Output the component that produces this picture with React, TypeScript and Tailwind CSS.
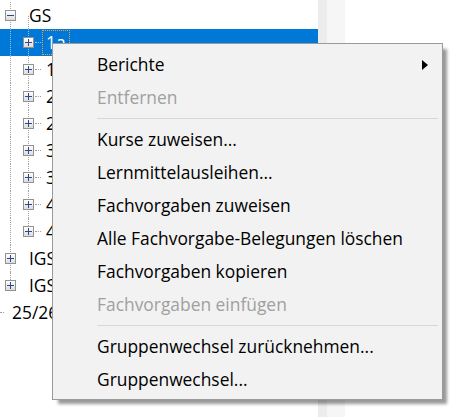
import React from "react";

type Node = { label: string; level: 0 | 1 | 2; expander?: "plus" | "minus"; selected?: boolean };

const rows: Node[] = [
  { label: "GS", level: 1, expander: "minus" },
  { label: "1a", level: 2, expander: "plus", selected: true },
  { label: "1b", level: 2, expander: "plus" },
  { label: "2a", level: 2, expander: "plus" },
  { label: "2b", level: 2, expander: "plus" },
  { label: "3a", level: 2, expander: "plus" },
  { label: "3b", level: 2, expander: "plus" },
  { label: "4a", level: 2, expander: "plus" },
  { label: "4b", level: 2, expander: "plus" },
  { label: "IGS", level: 1, expander: "plus" },
  { label: "IGS", level: 1, expander: "plus" },
  { label: "25/26", level: 0 },
];

type Item = { label: string; disabled?: boolean; submenu?: boolean } | "sep";

const menu: Item[] = [
  { label: "Berichte", submenu: true },
  { label: "Entfernen", disabled: true },
  "sep",
  { label: "Kurse zuweisen..." },
  { label: "Lernmittelausleihen..." },
  { label: "Fachvorgaben zuweisen" },
  { label: "Alle Fachvorgabe-Belegungen löschen" },
  { label: "Fachvorgaben kopieren" },
  { label: "Fachvorgaben einfügen", disabled: true },
  "sep",
  { label: "Gruppenwechsel zurücknehmen..." },
  { label: "Gruppenwechsel..." },
];

function Expander({ kind }: { kind: "plus" | "minus" }) {
  return (
    <span className="relative z-10 flex h-[11px] w-[11px] items-center justify-center border border-[#929292] bg-gradient-to-b from-white to-[#dcdcdc]">
      <svg width="9" height="9" viewBox="0 0 9 9">
        <rect x="1" y="4" width="7" height="1" fill="#2b4a8a" />
        {kind === "plus" && <rect x="4" y="1" width="1" height="7" fill="#2b4a8a" />}
      </svg>
    </span>
  );
}

function TreeRow({ node, index }: { node: Node; index: number }) {
  const sel = node.selected;
  const dots = sel ? "border-[#9cc6ee]" : "border-[#a0a0a0]";
  return (
    <div className={`relative flex h-[27px] items-center ${sel ? "bg-[#0078d7]" : ""}`}>
      {/* vertical connector for GS / IGS siblings */}
      {index <= 10 && (
        <span
          className={`absolute left-[10px] top-0 w-0 border-l border-dotted ${dots} ${index === 10 ? "h-[14px]" : "h-[27px]"}`}
        />
      )}
      {/* vertical connector for class nodes under GS */}
      {index <= 8 && (
        <span
          className={`absolute left-[28px] w-0 border-l border-dotted ${dots} ${index === 0 ? "top-[14px] h-[13px]" : index === 8 ? "top-0 h-[14px]" : "top-0 h-[27px]"}`}
        />
      )}
      {node.level === 0 && (
        <>
          <span className="absolute left-0 top-[13px] h-0 w-[4px] border-t border-dotted border-[#a0a0a0]" />
          <span className="pl-[12px]">{node.label}</span>
        </>
      )}
      {node.level === 1 && (
        <>
          <span className="ml-[5px]">{node.expander && <Expander kind={node.expander} />}</span>
          <span className="pl-[13px]">{node.label}</span>
        </>
      )}
      {node.level === 2 && (
        <>
          <span className="ml-[23px]">{node.expander && <Expander kind={node.expander} />}</span>
          <span className={`ml-[1px] h-0 w-[6px] border-t border-dotted ${dots}`} />
          <span
            className={`ml-[1px] flex h-[25px] items-center px-[3px] ${sel ? "border border-dotted border-[#e6a04a] text-white" : "border border-transparent"}`}
          >
            {node.label}
          </span>
        </>
      )}
    </div>
  );
}

export default function App() {
  return (
    <div
      className="relative flex h-[417px] w-[459px] overflow-hidden bg-white text-[17.4px] text-black"
      style={{ fontFamily: '"Segoe UI", "Open Sans", "Noto Sans", sans-serif' }}
    >
      {/* tree panel */}
      <div className="w-[318px] shrink-0 pt-[2px]">
        {rows.map((n, i) => (
          <TreeRow key={i} node={n} index={i} />
        ))}
      </div>
      {/* splitter strip */}
      <div className="w-[9px] shrink-0 bg-[#ececec]" />
      <div className="w-[18px] shrink-0 bg-[#f6f6f6]" />
      <div className="flex-1 bg-white" />

      {/* context menu */}
      <div className="absolute left-[52px] top-[43px] w-[391px] border border-[#9a9a9a] bg-[#f2f2f2] pt-[4px] pb-[3px] shadow-[5px_5px_3px_-1px_rgba(0,0,0,0.4)]">
        {menu.map((it, i) =>
          it === "sep" ? (
            <div key={i} className="flex h-[9px] items-center pl-[44px] pr-[4px]">
              <div className="h-px w-full bg-[#d7d7d7]" />
            </div>
          ) : (
            <div
              key={i}
              className={`relative flex h-[33px] items-center pl-[44px] ${it.disabled ? "text-[#a0a0a0]" : "text-black"}`}
            >
              {it.label}
              {it.submenu && (
                <svg className="absolute right-[14px] top-[12px]" width="6" height="10" viewBox="0 0 6 10">
                  <path d="M0 0 L6 5 L0 10 Z" fill="#000" />
                </svg>
              )}
            </div>
          )
        )}
      </div>
    </div>
  );
}
